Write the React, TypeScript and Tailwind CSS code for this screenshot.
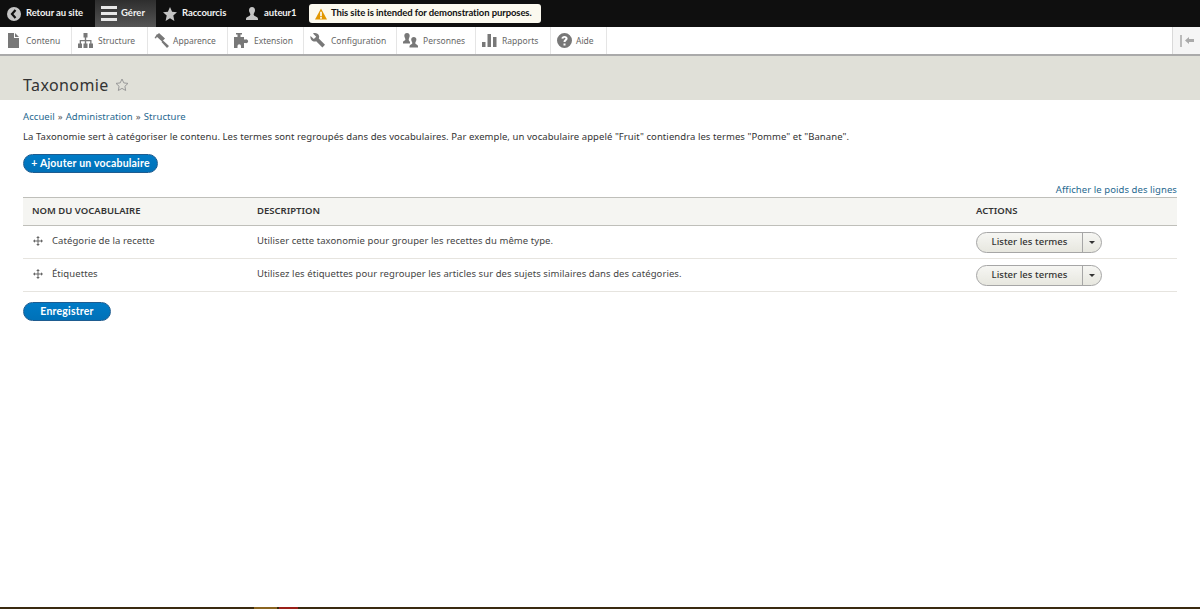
import type { ReactNode } from 'react';

const icon = 'h-[15px] w-[15px] shrink-0 fill-[#787878]';

const trayItems: { label: string; width: string; gap: string; path: ReactNode }[] = [
  {
    label: 'Contenu',
    width: 'w-[72px]',
    gap: 'gap-[5px]',
    path: <path d="M2 0h6v5h5v10H2zM9 0l4 4H9z" />,
  },
  {
    label: 'Structure',
    width: 'w-[76px]',
    gap: 'gap-[5px]',
    path: (
      <path d="M5.500 0h4v4.500h-1.300V7H13.500v3.500H15V15h-4v-4.500h1.200V8.300H8.200v2.200h1.300V15h-4v-4.500h1.300V8.300H3v2.200h1V15H0v-4.500h1.700V7h5.100V4.500H5.500z" />
    ),
  },
  {
    label: 'Apparence',
    width: 'w-[80px]',
    gap: 'gap-[4px]',
    path: (
      <path d="M5 0l6 5.500-3 3L2 3zM.5 5L3 1l1 1-2 3.500zM7.500 9l1.500-1.500L15 13l-2 2z" />
    ),
  },
  {
    label: 'Extension',
    width: 'w-[76px]',
    gap: 'gap-[5px]',
    path: (
      <path d="M0 4h3.500V1.500H2V0h6v1.500H6.500V4H10v2.500h1.500a1.900 1.900 0 1 1 0 3.500H10v5H7v-2a1.700 1.700 0 0 0-3.500 0v2H0z" />
    ),
  },
  {
    label: 'Configuration',
    width: 'w-[93px]',
    gap: 'gap-[6px]',
    path: (
      <path d="M.5 3l3.300 3 2.400-2.300L3 .5c2.300-1 5.300 0 6 2.200.3 1 .2 2-.2 2.800l6.200 6.300-2.600 2.700-6.200-6.300c-1 .5-2.200.5-3.200 0C1 7.200 0 5 .5 3z" />
    ),
  },
  {
    label: 'Personnes',
    width: 'w-[79px]',
    gap: 'gap-[5px]',
    path: (
      <path d="M4 0c1.800 0 2.700 1.200 2.700 2.800S5.700 5.500 5.700 6.800 7 8.500 7 9v1.500H0V9c0-1 2.400-1.100 2.400-2.400S1.300 4.400 1.300 2.800 2.200 0 4 0zM10.800 4c1.600 0 2.600 1 2.600 2.600S12.300 9 12.300 10.200 15 11.500 15 13v1.500H6.500V13c0-1.500 2.800-1.600 2.800-2.800S8.200 8.200 8.200 6.600 9.200 4 10.800 4z" />
    ),
  },
  {
    label: 'Rapports',
    width: 'w-[75px]',
    gap: 'gap-[5px]',
    path: <path d="M0 9h3.500v5H0zM5.500 1H9v13H5.500zM11 4h3.500v10H11z" />,
  },
  {
    label: 'Aide',
    width: 'w-[56px]',
    gap: 'gap-[4px]',
    path: (
      <path
        fillRule="evenodd"
        d="M7.500 0a7.500 7.500 0 1 1 0 15 7.500 7.500 0 0 1 0-15zM6.500 10.500v2h2v-2zM7.500 3C5.800 3 4.600 4 4.400 5.500l2 .3c.1-.6.500-1 1.100-1s1 .3 1 .8c0 .9-2 1.200-2 3.400h2c0-1.300 2.100-1.600 2.100-3.600C10.600 4 9.300 3 7.500 3z"
      />
    ),
  },
];

const rows = [
  {
    name: 'Catégorie de la recette',
    description: 'Utiliser cette taxonomie pour grouper les recettes du même type.',
  },
  {
    name: 'Étiquettes',
    description:
      'Utilisez les étiquettes pour regrouper les articles sur des sujets similaires dans des catégories.',
  },
];

function TopItem({ label, children }: { label: string; children: ReactNode }) {
  return (
    <div className="flex items-center gap-[5px] whitespace-nowrap font-['Lato',sans-serif] text-[9.5px] font-bold tracking-[-0.1px] text-[#f2f2f2]">
      {children}
      <span>{label}</span>
    </div>
  );
}

function DragHandle() {
  return (
    <svg viewBox="0 0 10 10" className="h-[10px] w-[10px] fill-[#666]">
      <path d="M5 0l1.800 2H5.500v2.500H8V3.200L10 5 8 6.800V5.500H5.500V8h1.300L5 10 3.200 8h1.300V5.500H2v1.300L0 5l2-1.800v1.300h2.500V2H3.200z" />
    </svg>
  );
}

function BlueButton({ label, width }: { label: string; width: string }) {
  return (
    <button
      type="button"
      className={`block h-[19px] ${width} whitespace-nowrap rounded-full border border-[#1e5c90] bg-gradient-to-b from-[#007bc6] to-[#0071b8] font-['Lato',sans-serif] text-[10.5px] font-bold tracking-[0.2px] text-white`}
    >
      {label}
    </button>
  );
}

function ActionsButton() {
  return (
    <div className="flex h-[21px] w-[126px] rounded-full border border-[#a6a6a6] bg-gradient-to-b from-[#f6f6f3] to-[#e7e7df] text-[9.5px] font-medium tracking-[0.05px] text-[#333]">
      <span className="flex w-[106px] items-center justify-center whitespace-nowrap border-r border-[#a6a6a6]">
        Lister les termes
      </span>
      <span className="flex flex-1 items-center justify-center">
        <span className="h-0 w-0 border-x-[3px] border-t-[3px] border-x-transparent border-t-[#333]" />
      </span>
    </div>
  );
}

export default function App() {
  return (
    <div className="flex h-[609px] flex-col bg-white font-['Noto_Sans',sans-serif] text-[#333]">
      <div className="flex h-[27px] items-center bg-[#0f0f0f]">
        <div className="ml-[7px] w-[88px]">
          <TopItem label="Retour au site">
            <svg viewBox="0 0 14 14" className="h-[14px] w-[14px]">
              <circle cx="7" cy="7" r="7" fill="#c4c4c4" />
              <path d="M8.500 3L5 7l3.500 4" fill="none" stroke="#0f0f0f" strokeWidth="2.200" />
            </svg>
          </TopItem>
        </div>
        <div className="flex h-full w-[61px] items-center gap-[4px] bg-gradient-to-b from-[#2e2e2e] to-[#555] pl-[6px] font-['Lato',sans-serif] text-[9.5px] font-bold text-[#f2f2f2]">
          <div className="flex w-[16px] flex-col gap-[3px]">
            <span className="h-[3px] bg-[#e8e8e8]" />
            <span className="h-[3px] bg-[#e8e8e8]" />
            <span className="h-[3px] bg-[#e8e8e8]" />
          </div>
          <span>Gérer</span>
        </div>
        <div className="ml-[7px] w-[82px]">
          <TopItem label="Raccourcis">
            <svg viewBox="0 0 14 14" className="h-[14px] w-[14px] fill-[#c4c4c4]">
              <path d="M7 0l2.100 4.800 4.900.5-3.700 3.300L11.400 14 7 11.200 2.600 14l1.100-5.400L0 5.300l4.900-.5z" />
            </svg>
          </TopItem>
        </div>
        <div className="w-[64px]">
          <TopItem label="auteur1">
            <svg viewBox="0 0 14 14" className="h-[14px] w-[14px] fill-[#c4c4c4]">
              <path d="M7 0c2 0 3 1.300 3 3.200 0 1.600-1 2.800-1.300 3.800-.2 1 .3 1.600 2 2.400 1.500.7 2.300 1.300 2.300 2.600v1H1v-1c0-1.300.8-1.900 2.300-2.600 1.700-.8 2.200-1.400 2-2.400C5 6 4 4.800 4 3.200 4 1.300 5 0 7 0z" />
            </svg>
          </TopItem>
        </div>
        <div className="flex h-[19px] w-[232px] items-center gap-[4px] whitespace-nowrap rounded-[3px] bg-[#fbf9ef] pl-[6px] font-['Lato',sans-serif] text-[9.5px] font-bold tracking-[-0.1px] text-[#111]">
          <svg viewBox="0 0 14 13" className="h-[12px] w-[12px] shrink-0">
            <path d="M7 0l7 13H0z" fill="#e29700" />
            <path d="M6 4h2v5H6zM6 10h2v2H6z" fill="#fbf9ef" />
          </svg>
          <span>This site is intended for demonstration purposes.</span>
        </div>
      </div>

      <div className="flex h-[29px] border-b-2 border-[#aaa] bg-white">
        {trayItems.map((item) => (
          <div
            key={item.label}
            className={`flex ${item.width} ${item.gap} items-center border-r border-[#e5e5e5] pl-[6px] text-[8.5px] text-[#666]`}
          >
            <svg viewBox="0 0 15 15" className={icon}>
              {item.path}
            </svg>
            <span className="pt-[1px]">{item.label}</span>
          </div>
        ))}
        <div className="ml-auto flex w-[28px] items-center justify-center gap-[3px] border-l border-[#d9d9d9] bg-[#f5f5f5]">
          <span className="h-[12px] w-[2px] bg-[#bbb]" />
          <svg viewBox="0 0 9 7" className="h-[7px] w-[9px] fill-[#aaa]">
            <path d="M0 3.500L4 0v2h5v3H4v2z" />
          </svg>
        </div>
      </div>

      <div className="flex h-[44px] items-end gap-[6px] bg-[#e0e0d8] pb-[5px] pl-[23px]">
        <h1 className="text-[16px] leading-[20px] tracking-[0.4px] text-[#333]">Taxonomie</h1>
        <svg viewBox="0 0 14 14" className="mb-[3px] h-[14px] w-[14px] fill-none stroke-[#999]">
          <path d="M7 1l1.800 3.900 4.200.5-3.100 2.900.8 4.200L7 10.400l-3.700 2.100.8-4.200L1 5.400l4.200-.5z" />
        </svg>
      </div>

      <div className="flex flex-1 flex-col px-[23px] pt-[12px] text-[9.5px] tracking-[0.07px]">
        <div className="flex h-[11px] items-center whitespace-pre text-[#26688f]">
          Accueil<span className="mx-[3px] text-[#555]">»</span>Administration
          <span className="mx-[3px] text-[#555]">»</span>Structure
        </div>
        <p className="mt-[8px] h-[11px] whitespace-nowrap leading-[11px] text-[#333]">
          La Taxonomie sert à catégoriser le contenu. Les termes sont regroupés dans des vocabulaires. Par exemple, un vocabulaire appelé "Fruit" contiendra les termes "Pomme" et "Banane".
        </p>
        <div className="mt-[12px]">
          <BlueButton label="+ Ajouter un vocabulaire" width="w-[135px]" />
        </div>
        <div className="mt-[9px] h-[15px] text-right leading-[15px] text-[#26688f]">
          Afficher le poids des lignes
        </div>
        <table className="w-full table-fixed border-collapse">
          <thead>
            <tr className="h-[28px] border-y border-y-[#bfbfba] bg-[#f5f5f2] text-left text-[9.5px] tracking-normal text-[#333]">
              <th className="w-[225px] pl-[9px] font-semibold">NOM DU VOCABULAIRE</th>
              <th className="pl-[9px] font-semibold">DESCRIPTION</th>
              <th className="w-[210px] pl-[9px] font-semibold">ACTIONS</th>
            </tr>
          </thead>
          <tbody>
            {rows.map((row) => (
              <tr key={row.name} className="h-[33px] border-b border-[#e6e4df]">
                <td className="pl-[10px]">
                  <div className="flex items-center gap-[9px] pb-[2px] text-[#444]">
                    <DragHandle />
                    <span>{row.name}</span>
                  </div>
                </td>
                <td className="pb-[2px] pl-[9px] text-[#444]">{row.description}</td>
                <td className="pl-[9px] pt-[1px]">
                  <ActionsButton />
                </td>
              </tr>
            ))}
          </tbody>
        </table>
        <div className="mt-[10px]">
          <BlueButton label="Enregistrer" width="w-[88px]" />
        </div>
      </div>

      <div className="flex h-[2px] bg-[#3a2a10]">
        <span className="ml-[254px] w-[23px] bg-[#8a6420]" />
        <span className="ml-[2px] w-[19px] bg-[#9a2018]" />
      </div>
    </div>
  );
}
